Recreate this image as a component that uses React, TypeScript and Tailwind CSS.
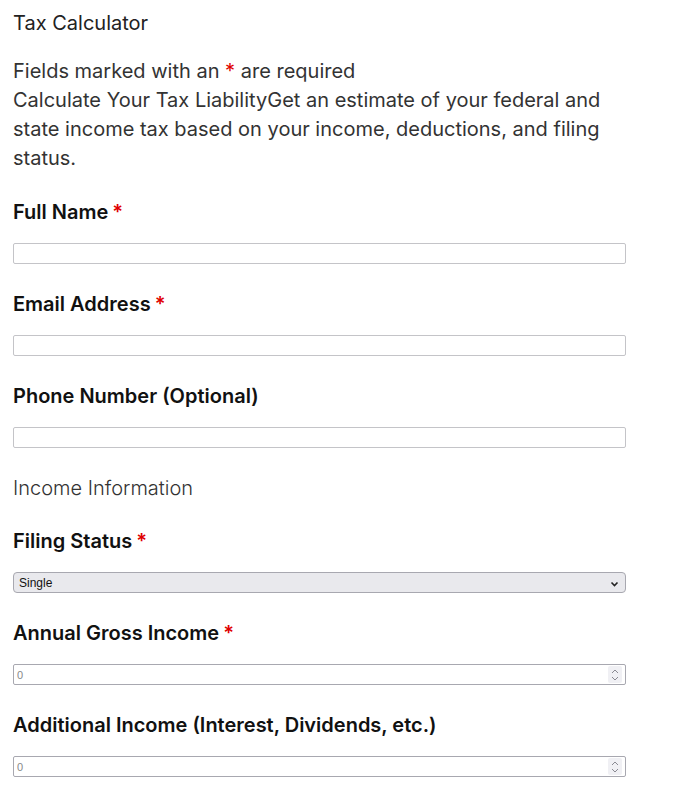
import React from 'react';

const Req = () => <span className="text-[#e00000] ml-1">*</span>;

function Label({ text, required }: { text: string; required?: boolean }) {
  return (
    <div className="text-[20px] leading-[28px] font-semibold text-[#111111] mb-[17px]">
      {text}
      {required && <Req />}
    </div>
  );
}

function TextBox() {
  return <input type="text" className="block w-full h-[21px] border border-[#c4c4c8] rounded-[2px] bg-white mb-[26px]" />;
}

function NumberBox() {
  return (
    <div className="flex items-center w-full h-[21px] border border-[#a8a8b0] rounded-[2px] bg-white mb-[26px]">
      <input
        type="text"
        defaultValue="0"
        className="flex-1 min-w-0 h-full px-[3px] text-[11px] text-[#888] outline-none"
        style={{ fontFamily: '"Liberation Sans", Arial, sans-serif' }}
      />
      <div className="flex flex-col items-center justify-center w-[14px] h-[17px] mr-[3px] bg-[#f0f0f4] rounded-[2px]">
        <svg width="8" height="5" viewBox="0 0 8 5" className="mb-[2px]">
          <path d="M1 4 L4 1 L7 4" fill="none" stroke="#8a8a92" strokeWidth="1" />
        </svg>
        <svg width="8" height="5" viewBox="0 0 8 5">
          <path d="M1 1 L4 4 L7 1" fill="none" stroke="#8a8a92" strokeWidth="1" />
        </svg>
      </div>
    </div>
  );
}

export default function App() {
  return (
    <div className="min-h-screen bg-white px-[13px] pt-[9px] text-[#333]" style={{ fontFamily: 'Inter, "Noto Sans", sans-serif' }}>
      <div className="w-[613px]">
        {/* Header */}
        <h1 className="text-[20px] leading-[28px] font-normal text-[#222] mb-[20px]">Tax Calculator</h1>
        <p className="text-[20px] leading-[29px] text-[#333] mb-[25px]">
          Fields marked with an <span className="text-[#e00000]">*</span> are required
          <br />
          Calculate Your Tax LiabilityGet an estimate of your federal and state income tax based on your income, deductions, and filing status.
        </p>

        {/* Contact */}
        <Label text="Full Name" required />
        <TextBox />
        <Label text="Email Address" required />
        <TextBox />
        <Label text="Phone Number (Optional)" />
        <TextBox />

        {/* Income */}
        <h2 className="text-[20px] leading-[28px] font-light text-[#333] mb-[25px]">Income Information</h2>

        <Label text="Filing Status" required />
        <div className="flex items-center w-full h-[21px] border border-[#a8a8b0] rounded-[4px] bg-[#e9e9ed] mb-[26px] px-[5px]">
          <span className="flex-1 text-[12px] text-[#111]" style={{ fontFamily: '"Liberation Sans", Arial, sans-serif' }}>Single</span>
          <svg width="9" height="6" viewBox="0 0 9 6" className="mr-[1px] mt-[2px]">
            <path d="M1.5 1.5 L4.5 4.5 L7.5 1.5" fill="none" stroke="#222" strokeWidth="1.6" />
          </svg>
        </div>

        <Label text="Annual Gross Income" required />
        <NumberBox />
        <Label text="Additional Income (Interest, Dividends, etc.)" />
        <NumberBox />
      </div>
    </div>
  );
}
